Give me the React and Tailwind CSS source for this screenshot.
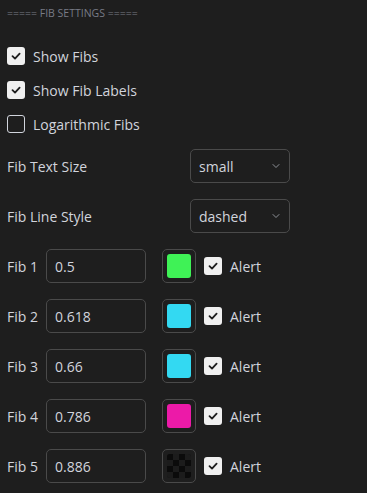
import { ChevronDown } from "lucide-react";

function Check({ checked }) {
  return (
    <div
      className={
        "w-[18px] h-[18px] rounded-[3px] flex items-center justify-center shrink-0 " +
        (checked ? "bg-[#f0f0f0]" : "border border-[#d1d4dc]")
      }
    >
      {checked && (
        <svg width="12" height="12" viewBox="0 0 12 12" fill="none">
          <path d="M2.5 6.2 5 8.6 9.6 3.6" stroke="#1e1e1e" strokeWidth="1.8" strokeLinecap="round" strokeLinejoin="round" />
        </svg>
      )}
    </div>
  );
}

function Select({ value }) {
  return (
    <div className="w-[100px] h-[34px] border border-[#4a4a4a] rounded-[5px] flex items-center justify-between pl-[8px] pr-[7px] text-[#d1d4dc]">
      <span>{value}</span>
      <ChevronDown size={12} strokeWidth={1.5} className="text-[#b2b5be]" />
    </div>
  );
}

const fibs = [
  { n: 1, v: "0.5", color: "bg-[#3ff256]" },
  { n: 2, v: "0.618", color: "bg-[#33d9f2]" },
  { n: 3, v: "0.66", color: "bg-[#33d9f2]" },
  { n: 4, v: "0.786", color: "bg-[#ec1aa8]" },
  { n: 5, v: "0.886", color: null },
];

export default function App() {
  return (
    <div className="w-[367px] h-[493px] bg-[#1e1e1e] text-[#d1d4dc] text-[14px] font-medium overflow-hidden" style={{ fontFamily: "'Open Sans', sans-serif" }}>
      <div className="pl-[7px] pt-[6px] text-[10.5px] font-normal text-[#787b86] h-[20px] leading-[14px]">===== FIB SETTINGS =====</div>

      <div className="pl-[7px] pt-[27px] flex flex-col gap-[16px]">
        {[
          ["Show Fibs", true],
          ["Show Fib Labels", true],
          ["Logarithmic Fibs", false],
        ].map(([label, c]) => (
          <div key={label} className="flex items-center gap-[8px] h-[18px]">
            <Check checked={c} />
            <span>{label}</span>
          </div>
        ))}
      </div>

      <div className="pl-[7px] pt-[16px] flex flex-col gap-[16px]">
        {[
          ["Fib Text Size", "small"],
          ["Fib Line Style", "dashed"],
        ].map(([label, v]) => (
          <div key={label} className="flex items-center h-[34px]">
            <span className="w-[183px]">{label}</span>
            <Select value={v} />
          </div>
        ))}
      </div>

      <div className="pl-[7px] pt-[16px] flex flex-col gap-[16px]">
        {fibs.map((f) => (
          <div key={f.n} className="flex items-center h-[34px]">
            <span className="w-[39px]">Fib {f.n}</span>
            <div className="w-[100px] h-[34px] border border-[#4a4a4a] rounded-[5px] flex items-center pl-[8px]">
              {f.v}
            </div>
            <div className="ml-[16px] w-[34px] h-[34px] border border-[#4a4a4a] rounded-[5px] flex items-center justify-center">
              {f.color ? (
                <div className={"w-[24px] h-[24px] rounded-[3px] " + f.color} />
              ) : (
                <div className="w-[24px] h-[24px] rounded-[3px] overflow-hidden grid grid-cols-4 bg-[#131313]">
                  {Array.from({ length: 16 }).map((_, i) => (
                    <div key={i} className={((Math.floor(i / 4) + i) % 2 === 0) ? "bg-[#0b0b0b]" : "bg-[#1c1c1c]"} />
                  ))}
                </div>
              )}
            </div>
            <div className="ml-[8px] flex items-center gap-[8px]">
              <Check checked />
              <span>Alert</span>
            </div>
          </div>
        ))}
      </div>
    </div>
  );
}
